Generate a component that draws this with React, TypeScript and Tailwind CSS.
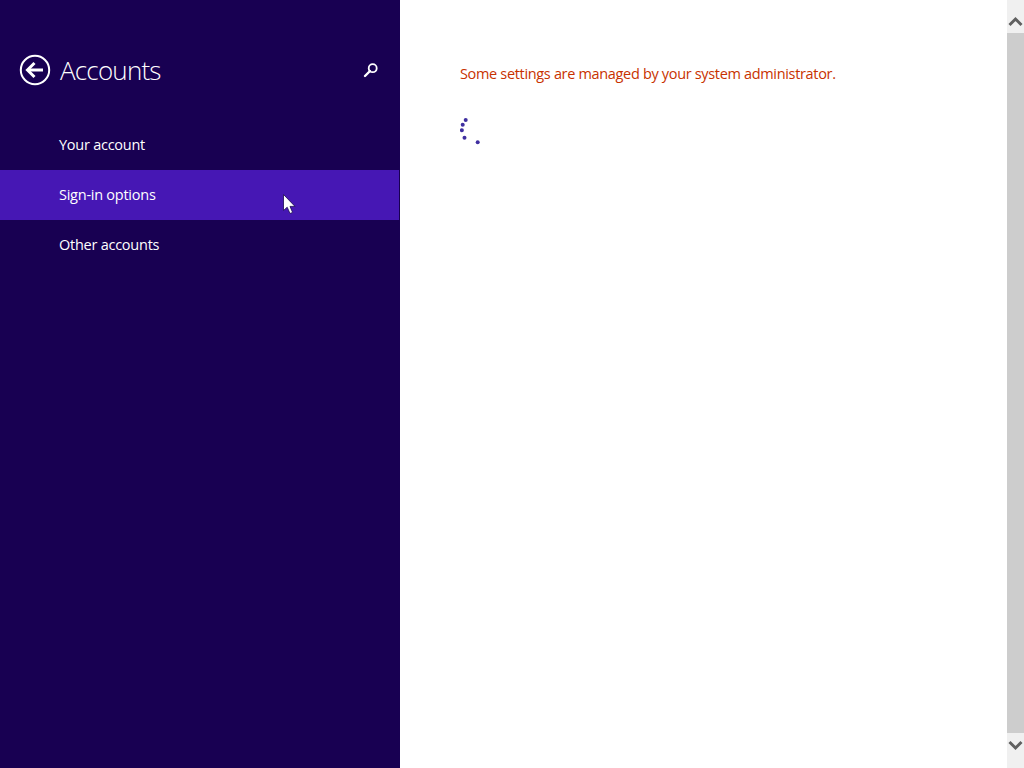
const items = ['Your account', 'Sign-in options', 'Other accounts'];

function BackIcon() {
  return (
    <svg width="32" height="32" viewBox="0 0 32 32" fill="none" className="shrink-0">
      <circle cx="16" cy="16" r="14.2" stroke="#fff" strokeWidth="2" />
      <path d="M24 16H9" stroke="#fff" strokeWidth="3" />
      <path d="M15.5 9 L8.5 16 L15.5 23" stroke="#fff" strokeWidth="3" />
    </svg>
  );
}

function SearchIcon() {
  return (
    <svg width="16" height="16" viewBox="0 0 16 16" fill="none">
      <circle cx="9.7" cy="6.2" r="4" stroke="#fff" strokeWidth="1.8" />
      <path d="M7 9 L2 14" stroke="#fff" strokeWidth="2.4" strokeLinecap="round" />
    </svg>
  );
}

function Spinner() {
  const dots = [
    [5.7, 2],
    [2.7, 6.7],
    [1.9, 12.3],
    [4.5, 19.7],
    [17.7, 24.3],
  ];
  return (
    <svg width="24" height="28" viewBox="0 0 24 28" className="mt-[34px]">
      {dots.map(([x, y]) => (
        <circle key={`${x}-${y}`} cx={x} cy={y} r="2" fill="#3f2fa0" />
      ))}
    </svg>
  );
}

// cursor is the only thing laid over the list
function Cursor() {
  return (
    <svg width="14" height="22" viewBox="0 0 14 22" className="absolute left-[283px] top-[24px]">
      <path d="M0.5 0.5V16.5L4.2 13.2L7 19.5L9.6 18.4L7 12.4H12Z" fill="#fff" stroke="#1a0a50" strokeWidth="0.8" />
    </svg>
  );
}

function Arrow({ d }: { d: string }) {
  return (
    <svg width="17" height="12" viewBox="0 0 17 12" fill="none">
      <path d={d} stroke="#606060" strokeWidth="3" />
    </svg>
  );
}

export default function App() {
  return (
    <div className="flex h-[768px] w-[1024px] overflow-hidden bg-white font-['Open_Sans',sans-serif]">
      <aside className="w-[400px] shrink-0 bg-[#180052]">
        <div className="flex items-center pl-[19px] pr-[21px] pt-[54px]">
          <BackIcon />
          <h1 className="ml-[9px] flex-1 text-[26px] leading-[32px] font-light tracking-[-0.8px] text-white">Accounts</h1>
          <SearchIcon />
        </div>
        <nav className="mt-[34px]">
          {items.map((item) => (
            <div
              key={item}
              className={`flex h-[50px] w-[399px] items-center pl-[59px] text-[14.5px] tracking-[-0.25px] text-white ${
                item === 'Sign-in options' ? 'relative bg-[#4617b4]' : ''
              }`}
            >
              {item}
              {item === 'Sign-in options' && <Cursor />}
            </div>
          ))}
        </nav>
      </aside>
      <main className="flex-1 pl-[60px] pt-[63px]">
        <p className="text-[14.5px] leading-[21px] tracking-[-0.33px] text-[#c83200]">
          Some settings are managed by your system administrator.
        </p>
        <Spinner />
      </main>
      <div className="flex w-[17px] shrink-0 flex-col bg-[#f0f0f0]">
        <div className="flex h-[33px] justify-center pt-[15px]">
          <Arrow d="M2.5 10 L8.5 4 L14.5 10" />
        </div>
        <div className="flex-1 bg-[#cdcdcd]" />
        <div className="flex h-[35px] justify-center pt-[7px]">
          <Arrow d="M2.5 2 L8.5 8 L14.5 2" />
        </div>
      </div>
    </div>
  );
}
